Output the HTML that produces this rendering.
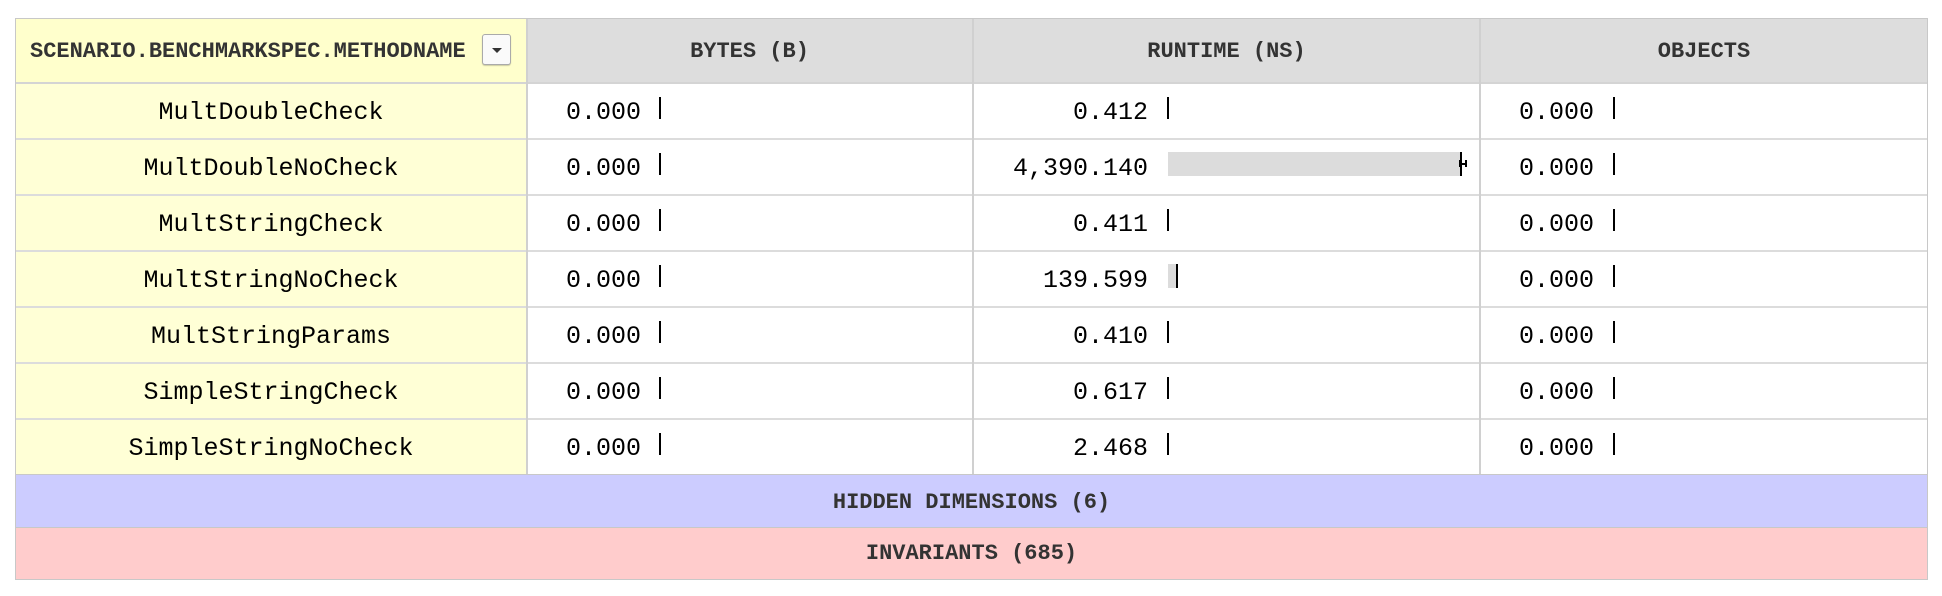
<!DOCTYPE html>
<html><head><meta charset="utf-8"><style>
body{margin:0;background:#fff;width:1942px;height:596px;position:relative;overflow:hidden;font-family:"Liberation Mono","DejaVu Sans Mono",monospace;}
.a{position:absolute;box-sizing:border-box;}
.hd{font-weight:bold;font-size:22px;color:#333;text-align:center;line-height:66px;}
.c1{font-size:25px;color:#000;text-align:center;line-height:60px;}
.num{font-size:25px;color:#000;text-align:right;line-height:60px;width:200px;}
.tick{width:2px;height:22px;background:#000;}
.bar{height:24px;background:#dcdcdc;}
</style></head><body>
<div class="a" style="left:15px;top:18px;width:1913px;height:562px;border:1px solid #c8c8c8;"></div>
<div class="a" style="left:16px;top:19px;width:510px;height:63px;background:#ffffcc;"></div>
<div class="a" style="left:527px;top:19px;width:1400px;height:63px;background:#dddddd;"></div>
<div class="a" style="left:16px;top:83px;width:510px;height:391px;background:#ffffd6;"></div>
<div class="a" style="left:16px;top:82px;width:1911px;height:2px;background:#d4d4d4;"></div>
<div class="a" style="left:16px;top:138px;width:1911px;height:2px;background:#dcdcdc;"></div>
<div class="a" style="left:16px;top:194px;width:1911px;height:2px;background:#dcdcdc;"></div>
<div class="a" style="left:16px;top:250px;width:1911px;height:2px;background:#dcdcdc;"></div>
<div class="a" style="left:16px;top:306px;width:1911px;height:2px;background:#dcdcdc;"></div>
<div class="a" style="left:16px;top:362px;width:1911px;height:2px;background:#dcdcdc;"></div>
<div class="a" style="left:16px;top:418px;width:1911px;height:2px;background:#dcdcdc;"></div>
<div class="a" style="left:526px;top:19px;width:2px;height:455px;background:#d0d0d0;"></div>
<div class="a" style="left:972px;top:19px;width:2px;height:455px;background:#d0d0d0;"></div>
<div class="a" style="left:1479px;top:19px;width:2px;height:455px;background:#d0d0d0;"></div>
<div class="a hd" style="left:16px;top:474px;width:1911px;height:53px;background:#ccccff;line-height:56px;border-top:1px solid #c8c8c8;">HIDDEN DIMENSIONS (6)</div>
<div class="a hd" style="left:16px;top:527px;width:1911px;height:52px;background:#ffcccc;line-height:52px;border-top:1px solid #c8c8c8;">INVARIANTS (685)</div>
<div class="a hd" style="left:30px;top:19px;">SCENARIO.BENCHMARKSPEC.METHODNAME</div>
<div class="a" style="left:482px;top:34px;width:29px;height:31px;background:#fafafa;border:1px solid #aaa;border-radius:3px;box-shadow:0 1px 1px rgba(0,0,0,.2);"></div>
<div class="a" style="left:492px;top:48px;width:0;height:0;border-left:5px solid transparent;border-right:5px solid transparent;border-top:5px solid #333;"></div>
<div class="a hd" style="left:527px;top:19px;width:445px;">BYTES (B)</div>
<div class="a hd" style="left:974px;top:19px;width:505px;">RUNTIME (NS)</div>
<div class="a hd" style="left:1481px;top:19px;width:446px;">OBJECTS</div>

<div class="a c1" style="left:16px;top:83px;width:510px;">MultDoubleCheck</div>
<div class="a c1" style="left:16px;top:139px;width:510px;">MultDoubleNoCheck</div>
<div class="a c1" style="left:16px;top:195px;width:510px;">MultStringCheck</div>
<div class="a c1" style="left:16px;top:251px;width:510px;">MultStringNoCheck</div>
<div class="a c1" style="left:16px;top:307px;width:510px;">MultStringParams</div>
<div class="a c1" style="left:16px;top:363px;width:510px;">SimpleStringCheck</div>
<div class="a c1" style="left:16px;top:419px;width:510px;">SimpleStringNoCheck</div>

<div class="a num" style="left:441px;top:83px;">0.000</div><div class="a tick" style="left:659px;top:97px;"></div>
<div class="a num" style="left:441px;top:139px;">0.000</div><div class="a tick" style="left:659px;top:153px;"></div>
<div class="a num" style="left:441px;top:195px;">0.000</div><div class="a tick" style="left:659px;top:209px;"></div>
<div class="a num" style="left:441px;top:251px;">0.000</div><div class="a tick" style="left:659px;top:265px;"></div>
<div class="a num" style="left:441px;top:307px;">0.000</div><div class="a tick" style="left:659px;top:321px;"></div>
<div class="a num" style="left:441px;top:363px;">0.000</div><div class="a tick" style="left:659px;top:377px;"></div>
<div class="a num" style="left:441px;top:419px;">0.000</div><div class="a tick" style="left:659px;top:433px;"></div>

<div class="a num" style="left:948px;top:83px;">0.412</div><div class="a tick" style="left:1167px;top:97px;"></div>
<div class="a num" style="left:948px;top:139px;">4,390.140</div><div class="a bar" style="left:1168px;top:152px;width:293px;"></div><div class="a tick" style="left:1460px;top:152px;height:24px;"></div><div class="a" style="left:1459px;top:160px;width:8px;height:7px;border-left:2px solid #000;border-right:2px solid #000;"></div><div class="a" style="left:1459px;top:163px;width:8px;height:2px;background:#000;"></div>
<div class="a num" style="left:948px;top:195px;">0.411</div><div class="a tick" style="left:1167px;top:209px;"></div>
<div class="a num" style="left:948px;top:251px;">139.599</div><div class="a bar" style="left:1168px;top:264px;width:8px;"></div><div class="a tick" style="left:1176px;top:264px;height:24px;"></div>
<div class="a num" style="left:948px;top:307px;">0.410</div><div class="a tick" style="left:1167px;top:321px;"></div>
<div class="a num" style="left:948px;top:363px;">0.617</div><div class="a tick" style="left:1167px;top:377px;"></div>
<div class="a num" style="left:948px;top:419px;">2.468</div><div class="a tick" style="left:1167px;top:433px;"></div>

<div class="a num" style="left:1394px;top:83px;">0.000</div><div class="a tick" style="left:1613px;top:97px;"></div>
<div class="a num" style="left:1394px;top:139px;">0.000</div><div class="a tick" style="left:1613px;top:153px;"></div>
<div class="a num" style="left:1394px;top:195px;">0.000</div><div class="a tick" style="left:1613px;top:209px;"></div>
<div class="a num" style="left:1394px;top:251px;">0.000</div><div class="a tick" style="left:1613px;top:265px;"></div>
<div class="a num" style="left:1394px;top:307px;">0.000</div><div class="a tick" style="left:1613px;top:321px;"></div>
<div class="a num" style="left:1394px;top:363px;">0.000</div><div class="a tick" style="left:1613px;top:377px;"></div>
<div class="a num" style="left:1394px;top:419px;">0.000</div><div class="a tick" style="left:1613px;top:433px;"></div>
</body></html>
